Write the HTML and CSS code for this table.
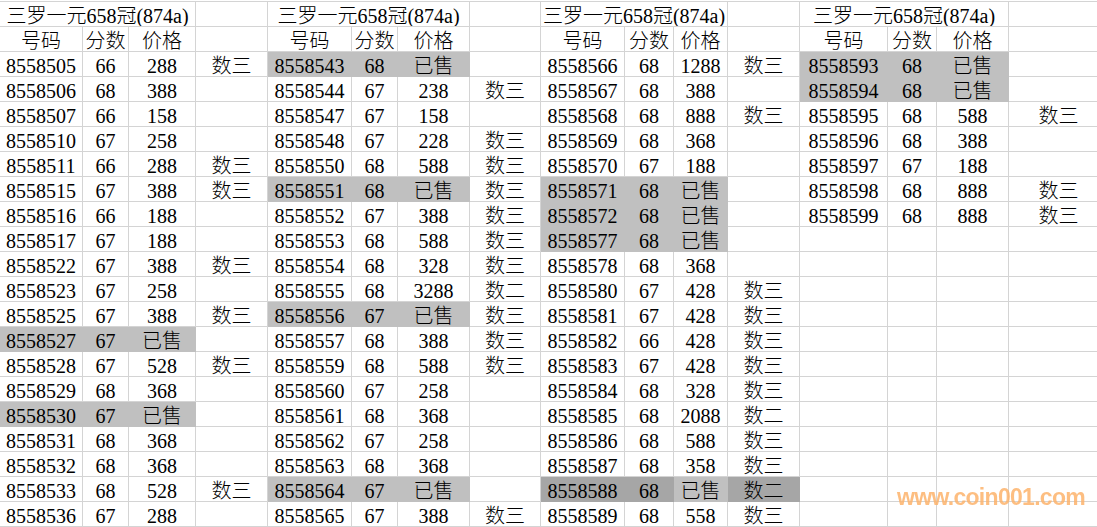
FILE: index.html
```html
<!DOCTYPE html>
<html lang="zh">
<head>
<meta charset="utf-8">
<title>三罗一元658冠(874a)</title>
<link rel="stylesheet" href="styles.css">
</head>
<body>
<div class="sheet">
  <div class="c t">三罗一元658冠(874a)</div><div class="c"></div><div class="c t">三罗一元658冠(874a)</div><div class="c"></div><div class="c t">三罗一元658冠(874a)</div><div class="c"></div><div class="c t">三罗一元658冠(874a)</div><div class="c"></div>
  <div class="c">号码</div><div class="c">分数</div><div class="c">价格</div><div class="c"></div><div class="c">号码</div><div class="c">分数</div><div class="c">价格</div><div class="c"></div><div class="c">号码</div><div class="c">分数</div><div class="c">价格</div><div class="c"></div><div class="c">号码</div><div class="c">分数</div><div class="c">价格</div><div class="c"></div>

  <div class="c">8558505</div><div class="c">66</div><div class="c">288</div><div class="c">数三</div><div class="c g">8558543</div><div class="c g">68</div><div class="c g">已售</div><div class="c"></div><div class="c">8558566</div><div class="c">68</div><div class="c">1288</div><div class="c">数三</div><div class="c g">8558593</div><div class="c g">68</div><div class="c g">已售</div><div class="c"></div>
  <div class="c">8558506</div><div class="c">68</div><div class="c">388</div><div class="c"></div><div class="c">8558544</div><div class="c">67</div><div class="c">238</div><div class="c">数三</div><div class="c">8558567</div><div class="c">68</div><div class="c">388</div><div class="c"></div><div class="c g">8558594</div><div class="c g">68</div><div class="c g">已售</div><div class="c"></div>
  <div class="c">8558507</div><div class="c">66</div><div class="c">158</div><div class="c"></div><div class="c">8558547</div><div class="c">67</div><div class="c">158</div><div class="c"></div><div class="c">8558568</div><div class="c">68</div><div class="c">888</div><div class="c">数三</div><div class="c">8558595</div><div class="c">68</div><div class="c">588</div><div class="c">数三</div>
  <div class="c">8558510</div><div class="c">67</div><div class="c">258</div><div class="c"></div><div class="c">8558548</div><div class="c">67</div><div class="c">228</div><div class="c">数三</div><div class="c">8558569</div><div class="c">68</div><div class="c">368</div><div class="c"></div><div class="c">8558596</div><div class="c">68</div><div class="c">388</div><div class="c"></div>
  <div class="c">8558511</div><div class="c">66</div><div class="c">288</div><div class="c">数三</div><div class="c">8558550</div><div class="c">68</div><div class="c">588</div><div class="c">数三</div><div class="c">8558570</div><div class="c">67</div><div class="c">188</div><div class="c"></div><div class="c">8558597</div><div class="c">67</div><div class="c">188</div><div class="c"></div>
  <div class="c">8558515</div><div class="c">67</div><div class="c">388</div><div class="c">数三</div><div class="c g">8558551</div><div class="c g">68</div><div class="c g">已售</div><div class="c">数三</div><div class="c g">8558571</div><div class="c g">68</div><div class="c g">已售</div><div class="c"></div><div class="c">8558598</div><div class="c">68</div><div class="c">888</div><div class="c">数三</div>
  <div class="c">8558516</div><div class="c">66</div><div class="c">188</div><div class="c"></div><div class="c">8558552</div><div class="c">67</div><div class="c">388</div><div class="c">数三</div><div class="c g">8558572</div><div class="c g">68</div><div class="c g">已售</div><div class="c"></div><div class="c">8558599</div><div class="c">68</div><div class="c">888</div><div class="c">数三</div>
  <div class="c">8558517</div><div class="c">67</div><div class="c">188</div><div class="c"></div><div class="c">8558553</div><div class="c">68</div><div class="c">588</div><div class="c">数三</div><div class="c g">8558577</div><div class="c g">68</div><div class="c g">已售</div><div class="c"></div><div class="c"></div><div class="c"></div><div class="c"></div><div class="c"></div>
  <div class="c">8558522</div><div class="c">67</div><div class="c">388</div><div class="c">数三</div><div class="c">8558554</div><div class="c">68</div><div class="c">328</div><div class="c">数三</div><div class="c">8558578</div><div class="c">68</div><div class="c">368</div><div class="c"></div><div class="c"></div><div class="c"></div><div class="c"></div><div class="c"></div>
  <div class="c">8558523</div><div class="c">67</div><div class="c">258</div><div class="c"></div><div class="c">8558555</div><div class="c">68</div><div class="c">3288</div><div class="c">数二</div><div class="c">8558580</div><div class="c">67</div><div class="c">428</div><div class="c">数三</div><div class="c"></div><div class="c"></div><div class="c"></div><div class="c"></div>
  <div class="c">8558525</div><div class="c">67</div><div class="c">388</div><div class="c">数三</div><div class="c g">8558556</div><div class="c g">67</div><div class="c g">已售</div><div class="c">数三</div><div class="c">8558581</div><div class="c">67</div><div class="c">428</div><div class="c">数三</div><div class="c"></div><div class="c"></div><div class="c"></div><div class="c"></div>
  <div class="c g">8558527</div><div class="c g">67</div><div class="c g">已售</div><div class="c"></div><div class="c">8558557</div><div class="c">68</div><div class="c">388</div><div class="c">数三</div><div class="c">8558582</div><div class="c">66</div><div class="c">428</div><div class="c">数三</div><div class="c"></div><div class="c"></div><div class="c"></div><div class="c"></div>
  <div class="c">8558528</div><div class="c">67</div><div class="c">528</div><div class="c">数三</div><div class="c">8558559</div><div class="c">68</div><div class="c">588</div><div class="c">数三</div><div class="c">8558583</div><div class="c">67</div><div class="c">428</div><div class="c">数三</div><div class="c"></div><div class="c"></div><div class="c"></div><div class="c"></div>
  <div class="c">8558529</div><div class="c">68</div><div class="c">368</div><div class="c"></div><div class="c">8558560</div><div class="c">67</div><div class="c">258</div><div class="c"></div><div class="c">8558584</div><div class="c">68</div><div class="c">328</div><div class="c">数三</div><div class="c"></div><div class="c"></div><div class="c"></div><div class="c"></div>
  <div class="c g">8558530</div><div class="c g">67</div><div class="c g">已售</div><div class="c"></div><div class="c">8558561</div><div class="c">68</div><div class="c">368</div><div class="c"></div><div class="c">8558585</div><div class="c">68</div><div class="c">2088</div><div class="c">数二</div><div class="c"></div><div class="c"></div><div class="c"></div><div class="c"></div>
  <div class="c">8558531</div><div class="c">68</div><div class="c">368</div><div class="c"></div><div class="c">8558562</div><div class="c">67</div><div class="c">258</div><div class="c"></div><div class="c">8558586</div><div class="c">68</div><div class="c">588</div><div class="c">数三</div><div class="c"></div><div class="c"></div><div class="c"></div><div class="c"></div>
  <div class="c">8558532</div><div class="c">68</div><div class="c">368</div><div class="c"></div><div class="c">8558563</div><div class="c">68</div><div class="c">368</div><div class="c"></div><div class="c">8558587</div><div class="c">68</div><div class="c">358</div><div class="c">数三</div><div class="c"></div><div class="c"></div><div class="c"></div><div class="c"></div>
  <div class="c">8558533</div><div class="c">68</div><div class="c">528</div><div class="c">数三</div><div class="c g">8558564</div><div class="c g">67</div><div class="c g">已售</div><div class="c"></div><div class="c d">8558588</div><div class="c d">68</div><div class="c g">已售</div><div class="c d">数二</div><div class="c"></div><div class="c"></div><div class="c"></div><div class="c"></div>
  <div class="c">8558536</div><div class="c">67</div><div class="c">288</div><div class="c"></div><div class="c">8558565</div><div class="c">67</div><div class="c">388</div><div class="c">数三</div><div class="c">8558589</div><div class="c">68</div><div class="c">558</div><div class="c">数三</div><div class="c"></div><div class="c"></div><div class="c"></div><div class="c"></div>
</div>
<div class="watermark">www.coin001.com</div>
</body>
</html>
```

FILE: styles.css
```css
html, body {
  margin: 0;
  padding: 0;
  background: #ffffff;
  overflow: hidden;
}

body {
  position: relative;
  width: 1097px;
  height: 527px;
}

.sheet {
  display: grid;
  grid-template-columns: 83px 46px 67px 72px 84px 46px 72px 71px 84px 49px 54px 72px 88px 49px 72px 100px;
  grid-auto-rows: 25px;
  margin-top: 1px;
  border-top: 1px solid #d4d4d4;
  font-family: "Liberation Serif", "Noto Sans CJK SC", serif;
  font-size: 20px;
  font-weight: 300;
  color: #000;
}

.c {
  box-sizing: border-box;
  border-right: 1px solid #d4d4d4;
  border-bottom: 1px solid #d4d4d4;
  text-align: center;
  line-height: 24px;
  padding-top: 2px;
  white-space: nowrap;
  overflow: hidden;
}

.t {
  grid-column: span 3;
}

.g {
  background: #c0c0c0;
  border-color: #c0c0c0;
}

.d {
  background: #a6a6a6;
  border-color: #a6a6a6;
}

.watermark {
  position: absolute;
  left: 897px;
  top: 486px;
  font-family: "Liberation Sans", Arial, sans-serif;
  font-weight: bold;
  font-size: 23px;
  line-height: 1;
  letter-spacing: -0.7px;
  color: #fdb36c;
  opacity: 0.85;
  filter: blur(0.4px);
  white-space: nowrap;
}
```
